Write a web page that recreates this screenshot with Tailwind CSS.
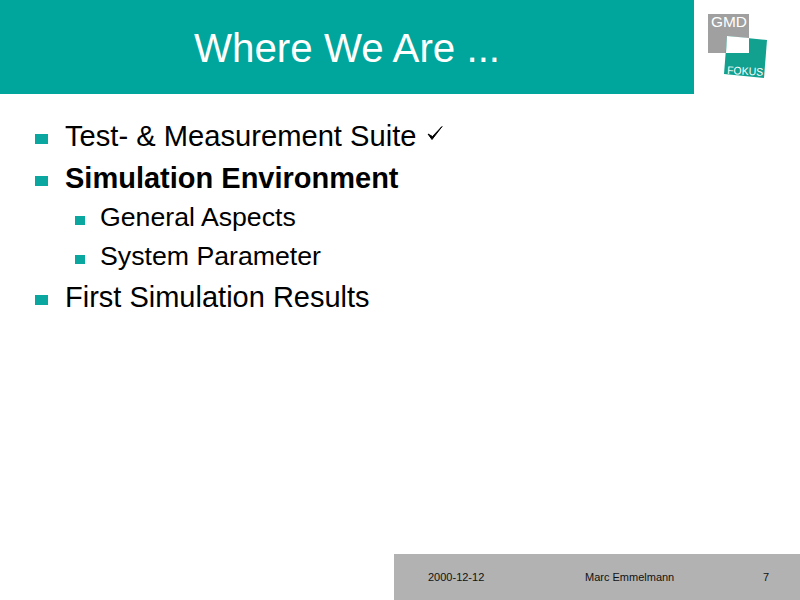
<!DOCTYPE html>
<html lang="en">
<head>
  <meta charset="UTF-8">
  <title>Where We Are ...</title>
  <script src="https://cdn.jsdelivr.net/npm/@tailwindcss/browser@4"></script>
</head>
<body class="bg-white w-[800px] h-[600px] overflow-hidden flex flex-col font-['Liberation_Sans',Arial,sans-serif] text-black">
  <!-- Title bar + logo -->
  <header class="flex h-[94px]">
    <div class="w-[694px] bg-[#00a69c] pl-[194px] pt-[26px] text-white text-[40.3px] leading-[46px]">Where We Are ...</div>
    <svg class="w-[106px] h-[94px]" viewBox="694 0 106 94">
      <rect x="708" y="14" width="41" height="39" fill="#a0a0a0"/>
      <polygon points="727,36 767,40 764,78 724,74" fill="#12a08f"/>
      <polygon points="727,36 749,38 749,53 726,53" fill="#fff"/>
      <text x="711" y="27" fill="#fff" font-size="14" textLength="36" lengthAdjust="spacingAndGlyphs" font-family="Liberation Sans">GMD</text>
      <text x="727" y="74" fill="#fff" font-size="11" textLength="36" lengthAdjust="spacingAndGlyphs" font-family="Liberation Sans" transform="rotate(3 727 74)">FOKUS</text>
    </svg>
  </header>

  <!-- Bullets -->
  <ul class="flex-1 pl-[35px] pt-[27px]">
    <li class="flex items-center h-[32px] mb-[10px] text-[29.15px]">
      <span class="w-[13px] h-[10px] bg-[#0aa7a0] mr-[17px] mt-[4px]"></span>
      <span>Test- &amp; Measurement Suite</span>
      <svg class="w-[18px] h-[17px] ml-[10px] mb-[7px]" viewBox="0 0 17 17"><path d="M1.5 9 L5.5 14.5 L15.5 1.5 L6 11.5 Z" fill="#000" stroke="#000" stroke-width="1"/></svg>
    </li>
    <li class="flex items-center h-[32px] mb-[7px] text-[29px] font-bold">
      <span class="w-[13px] h-[10px] bg-[#0aa7a0] mr-[17px] mt-[4px]"></span>
      <span>Simulation Environment</span>
    </li>
    <li class="flex items-center h-[30px] mb-[9px] ml-[40px] text-[26.7px]">
      <span class="w-[10px] h-[9px] bg-[#0aa7a0] mr-[15px] mt-[7px]"></span>
      <span>General Aspects</span>
    </li>
    <li class="flex items-center h-[30px] mb-[11px] ml-[40px] text-[26.7px]">
      <span class="w-[10px] h-[9px] bg-[#0aa7a0] mr-[15px] mt-[7px]"></span>
      <span>System Parameter</span>
    </li>
    <li class="flex items-center h-[32px] text-[29px]">
      <span class="w-[13px] h-[10px] bg-[#0aa7a0] mr-[17px] mt-[4px]"></span>
      <span>First Simulation Results</span>
    </li>
  </ul>

  <!-- Footer -->
  <footer class="ml-[394px] h-[46px] bg-[#b2b2b2] flex items-center text-[11px] text-[#111]">
    <span class="ml-[34px] w-[157px]">2000-12-12</span>
    <span class="w-[178px]">Marc Emmelmann</span>
    <span>7</span>
  </footer>
</body>
</html>
